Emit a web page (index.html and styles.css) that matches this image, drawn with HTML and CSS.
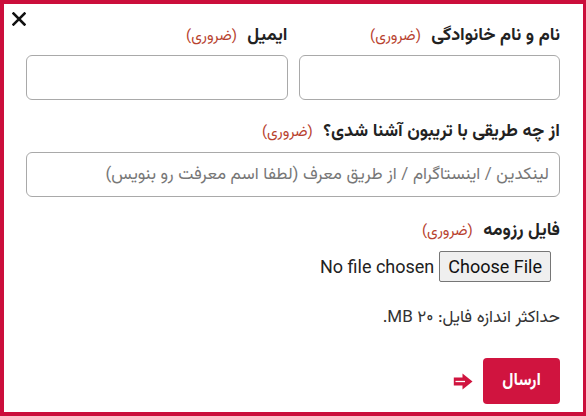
FILE: index.html
```html
<!DOCTYPE html>
<html lang="fa">
<head>
<meta charset="utf-8">
<title>فرم</title>
<link rel="stylesheet" href="styles.css">
</head>
<body>
<div class="modal">
  <button class="close" type="button" aria-label="بستن">
    <svg width="14" height="14" viewBox="0 0 14 14"><path d="M1.5 1.5L12.5 12.5M12.5 1.5L1.5 12.5" stroke="#111" stroke-width="2.5" stroke-linecap="square"/></svg>
  </button>
  <form class="form" dir="rtl">
    <div class="row two">
      <div class="field">
        <label class="label">نام و نام خانوادگی <span class="req">(ضروری)</span></label>
        <input class="input" type="text">
      </div>
      <div class="field">
        <label class="label">ایمیل <span class="req">(ضروری)</span></label>
        <input class="input" type="email">
      </div>
    </div>
    <div class="field f-source">
      <label class="label">از چه طریقی با تریبون آشنا شدی؟ <span class="req">(ضروری)</span></label>
      <input class="input" type="text" placeholder="لینکدین / اینستاگرام / از طریق معرف (لطفا اسم معرفت رو بنویس)">
    </div>
    <div class="field f-file">
      <label class="label">فایل رزومه <span class="req">(ضروری)</span></label>
      <div class="file">
        <span class="file-btn">Choose File</span>
        <span class="file-name">No file chosen</span>
      </div>
    </div>
    <p class="hint">حداکثر اندازه فایل: ۲۰ MB.</p>
    <div class="actions">
      <button class="submit" type="button">ارسال</button>
      <svg class="arrow" width="20" height="17" viewBox="0 0 20 17"><path d="M0.8 4.6H9.5V0.5L19.5 8.5L9.5 16.5V12.4H0.8Z" fill="#d0143f"/><path d="M2.5 8.5H12" stroke="#fff" stroke-width="1.3"/></svg>
    </div>
  </form>
</div>
</body>
</html>
```
FILE: styles.css
```css
html, body {
  margin: 0;
  padding: 0;
  background: #fff;
}
.modal {
  position: relative;
  box-sizing: border-box;
  width: 586px;
  height: 416px;
  border: 4px solid #cb0e3b;
  border-right-width: 3px;
  background: #fff;
  font-family: "Vazirmatn", "Noto Sans Arabic", "DejaVu Sans", sans-serif;
  color: #222;
}
.close {
  position: absolute;
  left: 8px;
  top: 8px;
  width: 14px;
  height: 14px;
  padding: 0;
  border: 0;
  background: none;
  display: block;
}
.close svg { display: block; }
.form {
  padding: 20px 23px 0 22px;
  display: flex;
  flex-direction: column;
}
.row.two {
  display: grid;
  grid-template-columns: 1fr 1fr;
  column-gap: 11px;
}
.field {
  display: flex;
  flex-direction: column;
}
.label {
  font-size: 18px;
  font-weight: bold;
  line-height: 24px;
  height: 24px;
  margin-bottom: 7px;
  color: #222;
  white-space: nowrap;
}
.req {
  font-size: 15px;
  font-weight: normal;
  color: #b8432f;
  margin-right: 6px;
}
.input {
  box-sizing: border-box;
  height: 45px;
  width: 100%;
  border: 1px solid #a9a9a9;
  border-radius: 6px;
  padding: 0 10px;
  font-family: inherit;
  font-size: 17px;
  color: #333;
  background: #fff;
  margin: 0;
}
.input::placeholder { color: #777; }
.f-source { margin-top: 20px; }
.f-source .label { margin-bottom: 8px; }
.f-file { margin-top: 22px; }
.f-file .label { margin-bottom: 8px; }
.file {
  display: flex;
  align-items: center;
  gap: 5px;
  height: 31px;
  padding-right: 9px;
  font-family: Roboto, "Liberation Sans", sans-serif;
  font-size: 18px;
  color: #222;
}
.file-btn {
  box-sizing: border-box;
  height: 31px;
  padding: 0 8px;
  display: flex;
  align-items: center;
  border: 1px solid #767676;
  border-radius: 2px;
  background: #efefef;
  color: #111;
}
.hint {
  margin: 24px 0 0;
  font-size: 17px;
  line-height: 24px;
  color: #333;
}
.actions {
  margin-top: 28px;
  display: flex;
  align-items: center;
  gap: 10px;
}
.submit {
  width: 77px;
  height: 46px;
  border: 0;
  border-radius: 4px;
  background: #d0143f;
  color: #fff;
  font-family: inherit;
  font-size: 17px;
  font-weight: bold;
  padding: 0;
}
.arrow { display: block; }
```
